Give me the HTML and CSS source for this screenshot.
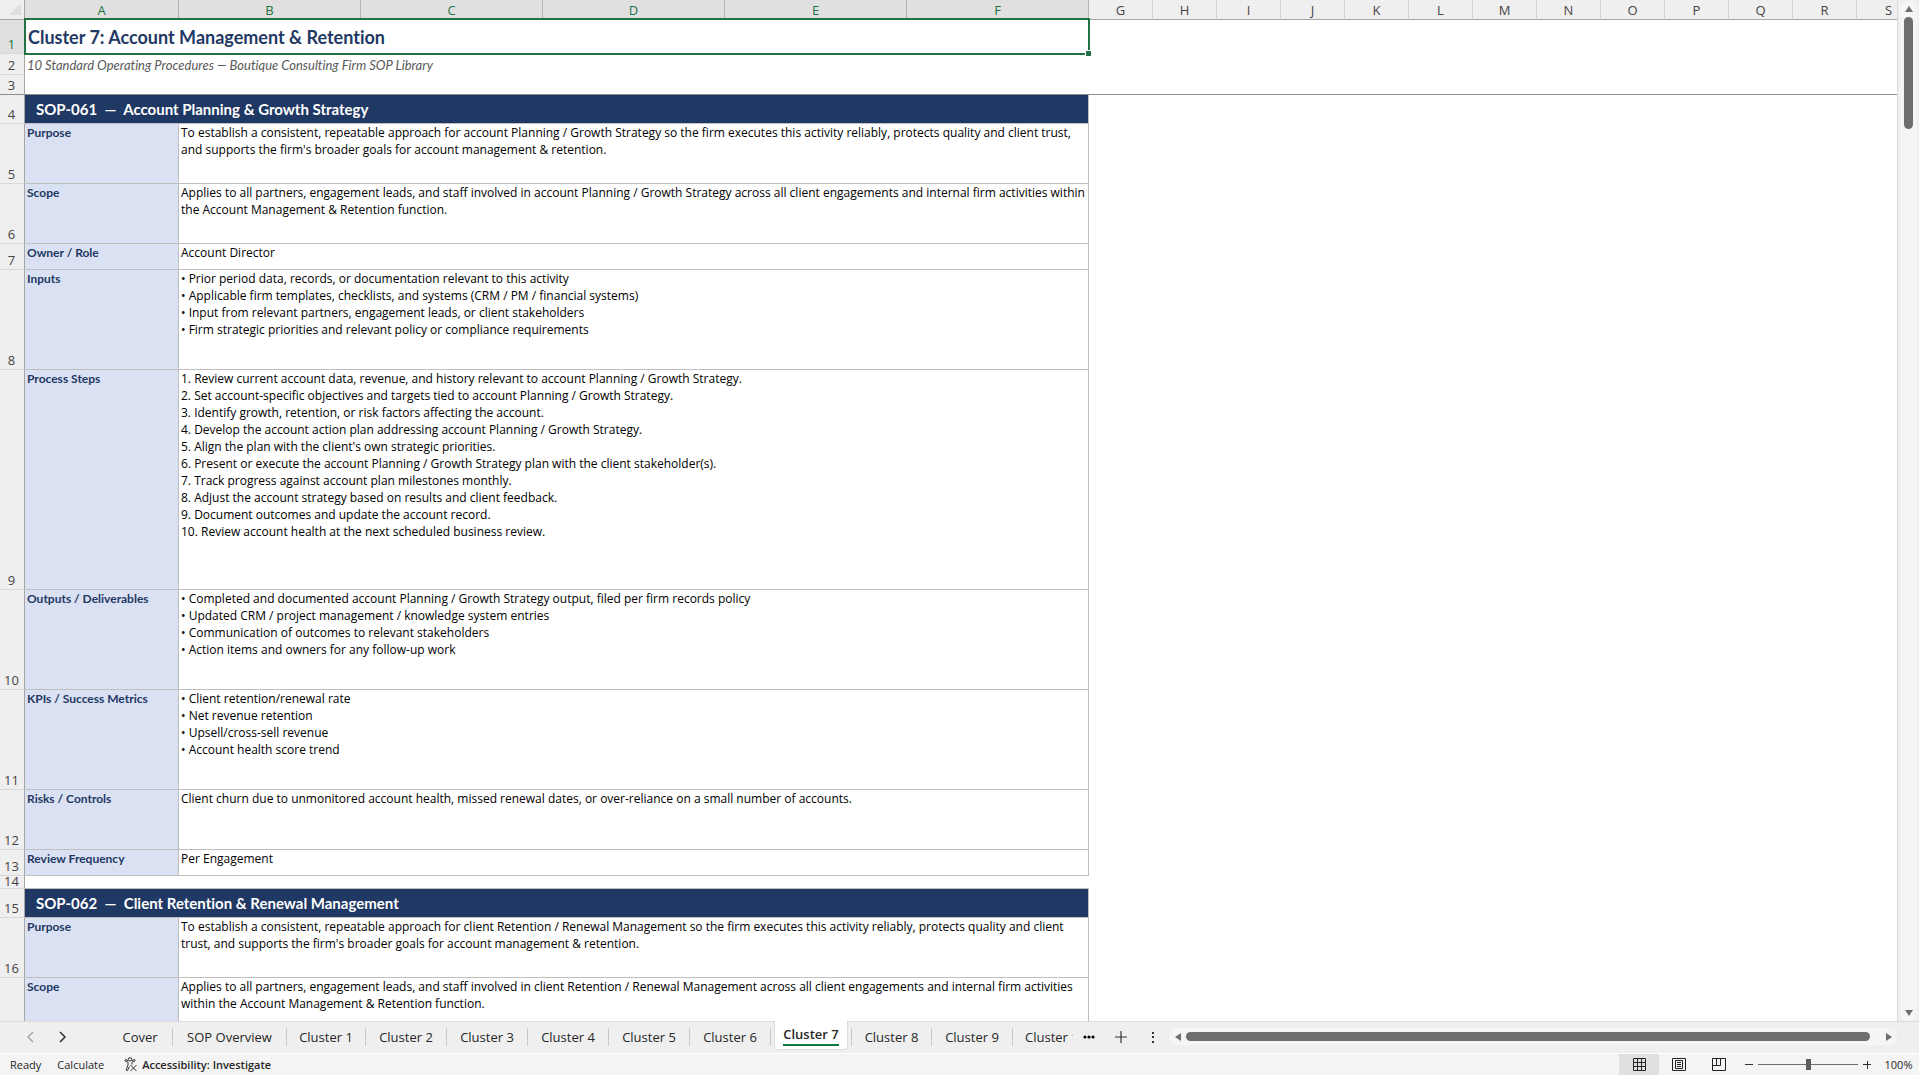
FILE: index.html
```
<!DOCTYPE html>
<html lang="en">
    <head>
        <meta charset="utf-8">
        <title>SOP Library</title>
        <link rel="stylesheet" href="styles.css">
    </head>
    <body>
        <div class="main">
            <div class="sheet">
                <table>
                    <colgroup>
                        <col class="colHead">
                        <col class="colA">
                        <col class="colWide" span="5">
                        <col class="colStd" span="13">
                    </colgroup>
                    <thead>
                        <tr>
                            <th class="corner"><svg width="12" height="12" viewBox="0 0 12 12"><path d="M12 0V12H0Z" fill="#dedede"/></svg></th>
                            <th class="active">A</th><th class="active">B</th><th class="active">C</th><th class="active">D</th><th class="active">E</th><th class="active">F</th>
                            <th>G</th><th>H</th><th>I</th><th>J</th><th>K</th><th>L</th><th>M</th><th>N</th><th>O</th><th>P</th><th>Q</th><th>R</th><th>S</th>
                        </tr>
                    </thead>
                    <tbody>
                        <tr class="r34">
                            <th class="active">1</th>
                            <td colspan="6" class="title">Cluster 7: Account Management &amp; Retention<span class="handle"></span></td>
                        </tr>
                        <tr class="r21">
                            <th>2</th>
                            <td colspan="6" class="subtitle">10 Standard Operating Procedures — Boutique Consulting Firm SOP Library</td>
                        </tr>
                        <tr class="r20 frozen">
                            <th>3</th>
                            <td colspan="19"></td>
                        </tr>
                        <tr class="r29">
                            <th>4</th>
                            <td colspan="6" class="sop">SOP-061&nbsp; —&nbsp; Account Planning &amp; Growth Strategy</td>
                        </tr>
                        <tr class="r60">
                            <th>5</th>
                            <td class="label">Purpose</td>
                            <td colspan="5" class="text">To establish a consistent, repeatable approach for account Planning / Growth Strategy so the firm executes this activity reliably, protects quality and client trust,<br>and supports the firm's broader goals for account management &amp; retention.</td>
                        </tr>
                        <tr class="r60">
                            <th>6</th>
                            <td class="label">Scope</td>
                            <td colspan="5" class="text">Applies to all partners, engagement leads, and staff involved in account Planning / Growth Strategy across all client engagements and internal firm activities within<br>the Account Management &amp; Retention function.</td>
                        </tr>
                        <tr class="r26">
                            <th>7</th>
                            <td class="label">Owner / Role</td>
                            <td colspan="5" class="text">Account Director</td>
                        </tr>
                        <tr class="r100">
                            <th>8</th>
                            <td class="label">Inputs</td>
                            <td colspan="5" class="text">• Prior period data, records, or documentation relevant to this activity<br>• Applicable firm templates, checklists, and systems (CRM / PM / financial systems)<br>• Input from relevant partners, engagement leads, or client stakeholders<br>• Firm strategic priorities and relevant policy or compliance requirements</td>
                        </tr>
                        <tr class="r220">
                            <th>9</th>
                            <td class="label">Process Steps</td>
                            <td colspan="5" class="text">1. Review current account data, revenue, and history relevant to account Planning / Growth Strategy.<br>2. Set account-specific objectives and targets tied to account Planning / Growth Strategy.<br>3. Identify growth, retention, or risk factors affecting the account.<br>4. Develop the account action plan addressing account Planning / Growth Strategy.<br>5. Align the plan with the client's own strategic priorities.<br>6. Present or execute the account Planning / Growth Strategy plan with the client stakeholder(s).<br>7. Track progress against account plan milestones monthly.<br>8. Adjust the account strategy based on results and client feedback.<br>9. Document outcomes and update the account record.<br>10. Review account health at the next scheduled business review.</td>
                        </tr>
                        <tr class="r100">
                            <th>10</th>
                            <td class="label">Outputs / Deliverables</td>
                            <td colspan="5" class="text">• Completed and documented account Planning / Growth Strategy output, filed per firm records policy<br>• Updated CRM / project management / knowledge system entries<br>• Communication of outcomes to relevant stakeholders<br>• Action items and owners for any follow-up work</td>
                        </tr>
                        <tr class="r100">
                            <th>11</th>
                            <td class="label">KPIs / Success Metrics</td>
                            <td colspan="5" class="text">• Client retention/renewal rate<br>• Net revenue retention<br>• Upsell/cross-sell revenue<br>• Account health score trend</td>
                        </tr>
                        <tr class="r60">
                            <th>12</th>
                            <td class="label">Risks / Controls</td>
                            <td colspan="5" class="text">Client churn due to unmonitored account health, missed renewal dates, or over-reliance on a small number of accounts.</td>
                        </tr>
                        <tr class="r26">
                            <th>13</th>
                            <td class="label">Review Frequency</td>
                            <td colspan="5" class="text">Per Engagement</td>
                        </tr>
                        <tr class="r13">
                            <th>14</th>
                            <td colspan="6" class="gap"></td>
                        </tr>
                        <tr class="r29">
                            <th>15</th>
                            <td colspan="6" class="sop">SOP-062&nbsp; —&nbsp; Client Retention &amp; Renewal Management</td>
                        </tr>
                        <tr class="r60">
                            <th>16</th>
                            <td class="label">Purpose</td>
                            <td colspan="5" class="text">To establish a consistent, repeatable approach for client Retention / Renewal Management so the firm executes this activity reliably, protects quality and client<br>trust, and supports the firm's broader goals for account management &amp; retention.</td>
                        </tr>
                        <tr class="r60">
                            <th></th>
                            <td class="label">Scope</td>
                            <td colspan="5" class="text">Applies to all partners, engagement leads, and staff involved in client Retention / Renewal Management across all client engagements and internal firm activities<br>within the Account Management &amp; Retention function.</td>
                        </tr>
                    </tbody>
                </table>
            </div>
            <div class="vscroll">
                <button aria-label="Scroll up"><svg width="10" height="8" viewBox="0 0 10 8"><path d="M5 1L9 7H1Z"/></svg></button>
                <div class="vthumb"></div>
                <button class="down" aria-label="Scroll down"><svg width="10" height="8" viewBox="0 0 10 8"><path d="M5 7L9 1H1Z"/></svg></button>
            </div>
        </div>

        <div class="tabBar">
            <div class="arrows">
                <button aria-label="Previous sheet"><svg width="8" height="12" viewBox="0 0 8 12"><path d="M6 1L1 6L6 11" fill="none" stroke="#a0a0a0" stroke-width="1.3"/></svg></button>
                <button aria-label="Next sheet"><svg width="8" height="12" viewBox="0 0 8 12"><path d="M1 1L6 6L1 11" fill="none" stroke="#333" stroke-width="1.5"/></svg></button>
            </div>
            <div class="tabs">
                <button>Cover</button>
                <button>SOP Overview</button>
                <button>Cluster 1</button>
                <button>Cluster 2</button>
                <button>Cluster 3</button>
                <button>Cluster 4</button>
                <button>Cluster 5</button>
                <button>Cluster 6</button>
                <button class="current"><span>Cluster 7</span></button>
                <button>Cluster 8</button>
                <button>Cluster 9</button>
                <button class="cut">Cluster 10</button>
            </div>
            <button class="more" aria-label="More sheets"><svg width="12" height="4" viewBox="0 0 12 4"><circle cx="2" cy="2" r="1.6"/><circle cx="6" cy="2" r="1.6"/><circle cx="10" cy="2" r="1.6"/></svg></button>
            <button class="add" aria-label="New sheet"><svg width="12" height="12" viewBox="0 0 12 12"><path d="M6 0V12M0 6H12" stroke="#333" stroke-width="1.2"/></svg></button>
            <div class="grip"><svg width="4" height="12" viewBox="0 0 4 12"><path d="M1 1h2v2h-2zM1 5h2v2h-2zM1 10h2v2h-2z" fill="#333"/></svg></div>
            <div class="hscroll">
                <button aria-label="Scroll left"><svg width="8" height="10" viewBox="0 0 8 10"><path d="M1 5L7 1V9Z"/></svg></button>
                <div class="hthumb"></div>
                <button aria-label="Scroll right"><svg width="8" height="10" viewBox="0 0 8 10"><path d="M7 5L1 1V9Z"/></svg></button>
            </div>
        </div>

        <div class="status">
            <span class="ready">Ready</span>
            <span class="calc">Calculate</span>
            <button class="access">
                <svg width="14" height="15" viewBox="0 0 14 15" fill="none" stroke="#333" stroke-width="1"><circle cx="6" cy="2.300" r="1.700"/><path d="M4.300 3.600L1.600 2.600Q.5 2.700 1 3.800L4 5.300V8L2.200 12.800Q2.500 14.200 3.500 13.500L5.500 9.500M7.700 3.600L10.400 2.600Q11.500 2.700 11 3.800L8 5.300V7.500M6.500 8L12.500 14M12.500 8L6.500 14"/></svg>
                Accessibility: Investigate
            </button>
            <div class="views">
                <button class="on" aria-label="Normal"><svg width="13" height="13" viewBox="0 0 13 13"><path d="M.5 .5h12v12h-12zM4.500 .5v12M8.500 .5v12M.5 4.500h12M.5 8.500h12" fill="none" stroke="#222"/></svg></button>
                <button aria-label="Page Layout"><svg width="14" height="13" viewBox="0 0 14 13"><path d="M.5 .5h13v12h-13zM3.500 2.500h7v8h-7zM5 4.500h4M5 6.500h4M5 8.500h4" fill="none" stroke="#222"/></svg></button>
                <button aria-label="Page Break Preview"><svg width="14" height="13" viewBox="0 0 14 13"><path d="M.5 .5h13v12h-13zM.5 7.500h8v-7M4.500 .5v7" fill="none" stroke="#222"/></svg></button>
            </div>
            <button class="zoomBtn" aria-label="Zoom out"><svg width="8" height="8" viewBox="0 0 8 8"><path d="M0 3.500H8" stroke="#333"/></svg></button>
            <input type="range" class="zoom" aria-label="Zoom" min="0" max="200" value="100">
            <button class="zoomBtn" aria-label="Zoom in"><svg width="8" height="8" viewBox="0 0 8 8"><path d="M0 3.500H8M4.500 0V8" stroke="#333"/></svg></button>
            <button class="percent">100%</button>
        </div>
    </body>
</html>
```
FILE: styles.css
```
*{
    box-sizing: border-box;
}
body{
    margin: 0;
    height: 100vh;
    display: flex;
    flex-direction: column;
    overflow: hidden;
    background: #efefef;
    color: #262626;
    font-family: "Open Sans", "Noto Sans", sans-serif;
}
button{
    border: 0;
    padding: 0;
    background: none;
    font: inherit;
    color: inherit;
    display: flex;
    align-items: center;
    justify-content: center;
}
svg{
    display: block;
}

/* sheet */
.main{
    flex: 1;
    min-height: 0;
    display: flex;
    border-bottom: 1px solid #dcdcdc;
}
.sheet{
    flex: 1;
    min-width: 0;
    overflow: hidden;
    background: #fff;
    border-right: 1px solid #dcdcdc;
}
table{
    table-layout: fixed;
    width: 1921px;
    border-collapse: separate;
    border-spacing: 0;
    font-family: Lato, "Open Sans", sans-serif;
    font-variant-ligatures: none;
}
.colHead{
    width: 25px;
}
.colA{
    width: 154px;
}
.colWide{
    width: 182px;
}
.colStd{
    width: 64px;
}
th, td{
    padding: 0;
}
th{
    background: #efefef;
    color: #444;
    font-family: "Open Sans", sans-serif;
    font-size: 13px;
    font-weight: 400;
    line-height: 16px;
}
thead th{
    height: 20px;
    padding-top: 1px;
    border-bottom: 1px solid #a6a6a6;
    border-right: 1px solid #d4d4d4;
}
thead .corner{
    border-right-color: #a6a6a6;
    padding: 0 3px 1px 9px;
}
tbody th{
    vertical-align: bottom;
    padding: 0 1px 1px 0;
    border-right: 1px solid #a6a6a6;
    border-bottom: 1px solid #d8d8d8;
}
.active{
    background: #e0e0e0;
    color: #1e7145;
}
thead .active{
    border-right-color: #b4b4b4;
}
.r13{ height: 13px; }
.r20{ height: 20px; }
.r21{ height: 21px; }
.r26{ height: 26px; }
.r29{ height: 29px; }
.r34{ height: 34px; }
.r60{ height: 60px; }
.r100{ height: 100px; }
.r220{ height: 220px; }
.r13 th{
    padding-bottom: 2px;
    line-height: 10px;
}
.title{
    position: relative;
    padding: 0 0 1px 3px;
    font-size: 18px;
    line-height: 22px;
    font-weight: 700;
    color: #1f3864;
}
/* selection frame, lies over the cell edges */
.title::after{
    content: "";
    position: absolute;
    inset: -2px -1px -1px -1px;
    border: 2px solid #217346;
}
.handle{
    position: absolute;
    z-index: 1;
    right: -2px;
    bottom: -2px;
    width: 6px;
    height: 6px;
    background: #217346;
    border: solid #fff;
    border-width: 1px 0 0 1px;
}
.subtitle{
    padding: 2px 0 0 2px;
    font-size: 13px;
    line-height: 17px;
    font-style: italic;
    color: #595959;
}
.frozen td, .frozen th{
    border-bottom: 1px solid #8c8c8c;
}
.sop{
    padding: 0 0 1px 11px;
    background: #203864;
    color: #fff;
    font-size: 15px;
    line-height: 20px;
    font-weight: 700;
    border-right: 1px solid #bfbfbf;
    border-bottom: 1px solid #bfbfbf;
}
.gap{
    border-bottom: 1px solid #bfbfbf;
}
.label, .text{
    vertical-align: top;
    padding: 0 0 0 2px;
    font-size: 12px;
    line-height: 17px;
    white-space: nowrap;
    border-right: 1px solid #bfbfbf;
    border-bottom: 1px solid #bfbfbf;
}
.label{
    background: #d9e1f2;
    color: #1f3864;
    font-weight: 700;
}
.text{
    color: #000;
    font-family: "Open Sans", sans-serif;
}

/* vertical scroll bar */
.vscroll{
    width: 17px;
    margin: 0 2px 0 2px;
    display: flex;
    flex-direction: column;
    align-items: center;
    background: #f5f5f5;
    border-radius: 8px;
}
.vscroll button{
    width: 17px;
    height: 17px;
}
.vscroll svg, .hscroll svg{
    fill: #6e6e6e;
}
.vthumb{
    width: 9px;
    height: 112px;
    border-radius: 5px;
    background: #6e6e6e;
}
.down{
    margin-top: auto;
}

/* sheet tabs */
.tabBar{
    height: 32px;
    display: flex;
    align-items: flex-start;
    border-bottom: 1px solid #fff;
    font-size: 13px;
}
.arrows{
    width: 108px;
    height: 30px;
    display: flex;
    align-items: center;
    padding-left: 21px;
    gap: 12px;
}
.arrows button{
    width: 20px;
    height: 20px;
}
.tabs{
    display: flex;
    height: 30px;
    align-items: center;
}
.tabs button{
    width: 81px;
    height: 18px;
    border-right: 1px solid #c8c8c8;
    white-space: nowrap;
}
.tabs button:nth-child(1){
    width: 65px;
}
.tabs button:nth-child(2){
    width: 114px;
}
.tabs button:nth-child(3){
    width: 79px;
}
.tabs .current{
    width: 74px;
    height: 29px;
    margin: -1px 3px 0 3px;
    align-self: flex-start;
    background: #fff;
    border: 1px solid #dcdcdc;
    border-top: 0;
    border-radius: 0 0 4px 4px;
    font-weight: 600;
}
.current span{
    border-bottom: 2px solid #107c41;
    line-height: 20px;
}
.current + button{
    border-left: 1px solid #c8c8c8;
}
/* last tab runs under the overflow dots */
.tabs .cut{
    width: 60px;
    padding-left: 12px;
    border: 0;
    justify-content: flex-start;
    overflow: hidden;
}
.more, .add, .grip{
    width: 32px;
    height: 30px;
    display: flex;
    align-items: center;
    justify-content: center;
}
.hscroll{
    flex: 1;
    height: 17px;
    margin: 6px 22px 0 0;
    display: flex;
    align-items: center;
    background: #f5f5f5;
    border-radius: 8px;
}
.hscroll button{
    width: 17px;
    height: 17px;
}
.hthumb{
    flex: 1;
    height: 9px;
    margin-right: 10px;
    border-radius: 5px;
    background: #6e6e6e;
}

/* status bar */
.status{
    height: 21px;
    display: flex;
    align-items: center;
    background: #f4f4f4;
    font-size: 11px;
    line-height: 20px;
}
.ready{
    margin-left: 10px;
}
.calc{
    margin-left: 16px;
}
.access{
    margin-left: 20px;
    gap: 4px;
    font-weight: 600;
}
.views{
    display: flex;
    margin-left: auto;
    margin-right: 6px;
}
.views button{
    width: 40px;
    height: 21px;
}
.on{
    background: #e0e0e0;
}
.zoomBtn{
    width: 8px;
    height: 20px;
}
.zoom{
    appearance: none;
    width: 100px;
    height: 15px;
    margin: 0 5px;
    background: linear-gradient(#6e6e6e, #6e6e6e) center / 100% 1px no-repeat;
}
.zoom::-webkit-slider-thumb{
    appearance: none;
    width: 5px;
    height: 11px;
    background: #5c5c5c;
}
.percent{
    width: 27px;
    margin: 0 7px 0 14px;
}
```
